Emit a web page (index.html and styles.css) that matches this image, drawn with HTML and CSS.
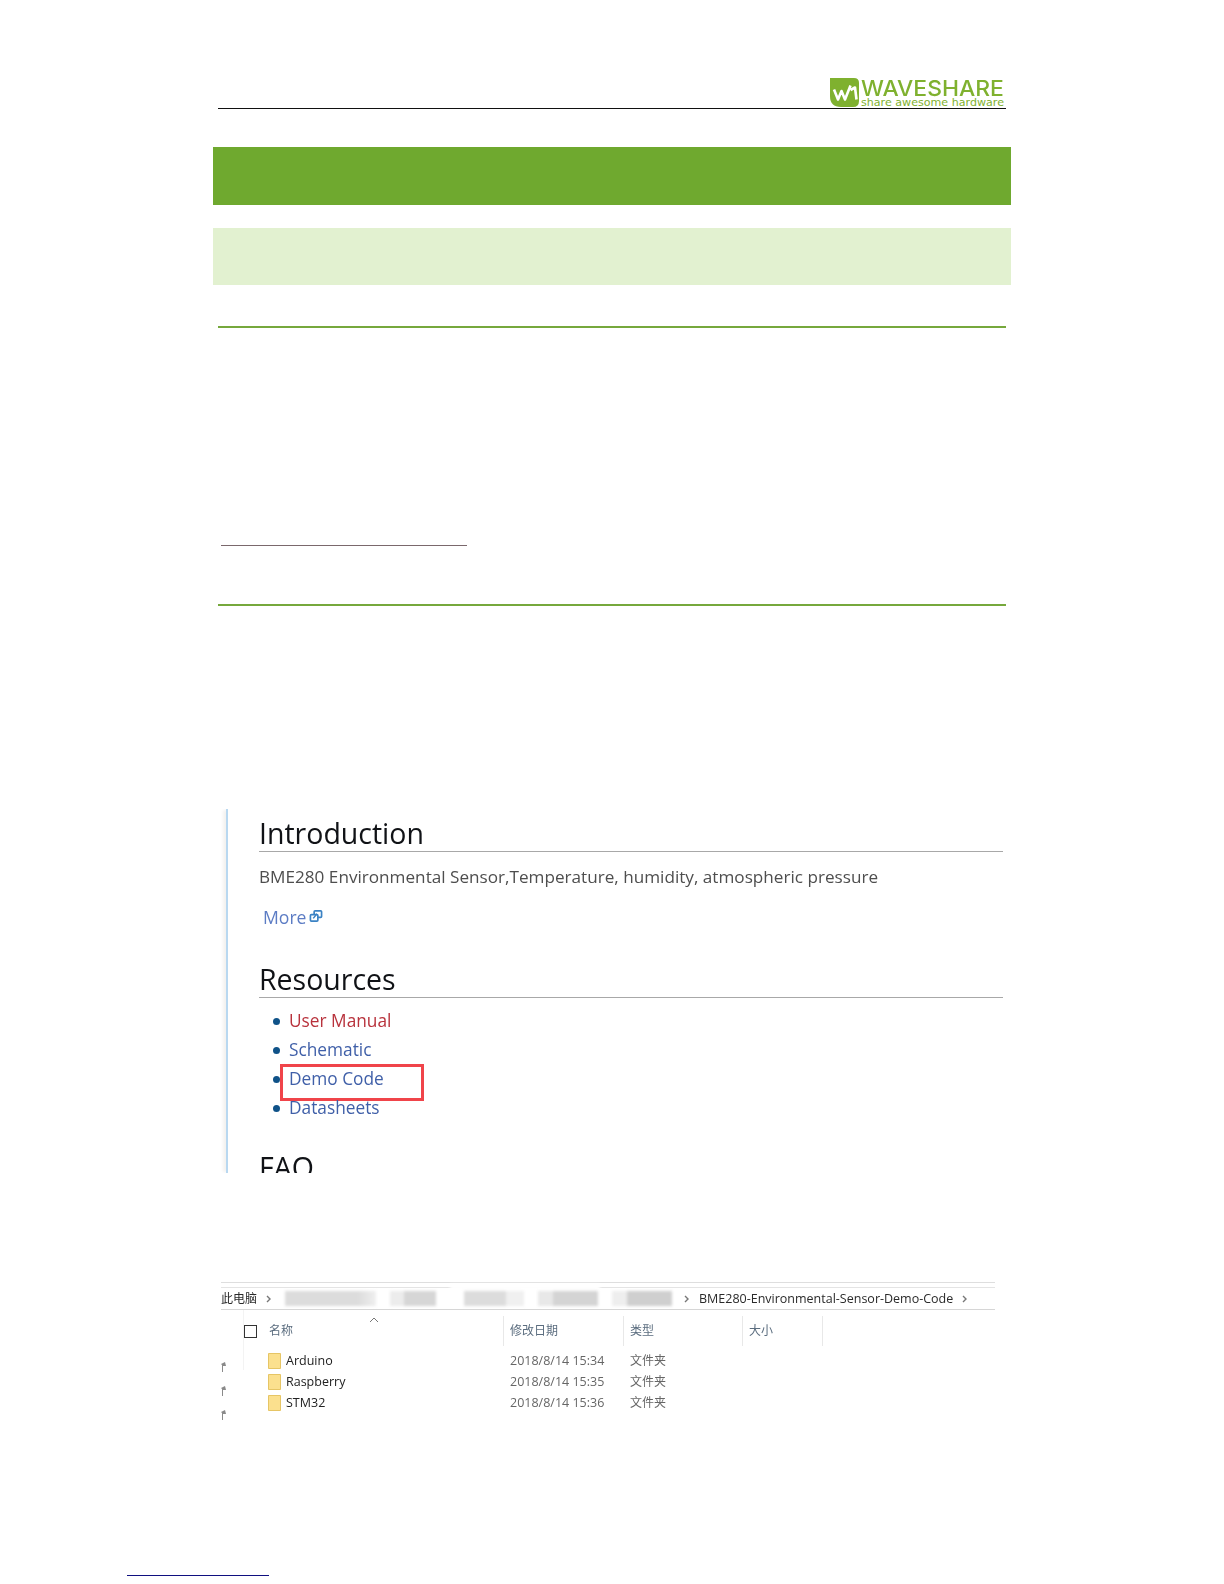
FILE: index.html
```html
<!DOCTYPE html>
<html lang="zh">
<head>
<meta charset="utf-8">
<title>BME280 Environmental Sensor</title>
<link rel="stylesheet" href="styles.css">
</head>
<body>
<div class="page">
  <header class="doc-header">
    <div class="logo">
      <svg class="logo-mark" viewBox="0 0 29 30" width="29" height="30" aria-hidden="true">
        <path d="M0 0H24Q29 0 29 5V23Q29 29 23 29H11Q0 29 0 18Z" fill="#7fb12f"/>
        <path d="M4 11.5L8 21.5L11.5 13L15 21.5L20.5 7.5M20.5 12L25 9.5L26.5 21.5" fill="none" stroke="#fff" stroke-width="2.6" stroke-linejoin="round"/>
      </svg>
      <div class="logo-words">
        <div class="logo-name">WAVESHARE</div>
        <div class="logo-tag">share awesome hardware</div>
      </div>
    </div>
  </header>
  <div class="band band-dark"></div>
  <div class="band band-light"></div>
  <div class="rule-green rule-a"></div>
  <div class="rule-muted"></div>
  <div class="rule-green rule-b"></div>

  <section class="wiki">
    <h2 class="wiki-title">Introduction</h2>
    <p class="wiki-text">BME280 Environmental Sensor,Temperature, humidity, atmospheric pressure</p>
    <p class="wiki-more">More<svg class="ext" viewBox="0 0 14 14" width="14" height="13" aria-hidden="true"><rect x="5" y="1" width="8" height="7" rx="1" fill="none" stroke="#3b82c4" stroke-width="1.8"/><rect x="1" y="5" width="8" height="7" rx="1" fill="#fff" stroke="#3b82c4" stroke-width="1.8"/><path d="M4 9L8 4" stroke="#3b82c4" stroke-width="1.6"/></svg></p>
    <h2 class="wiki-title wiki-title-b">Resources</h2>
    <ul class="wiki-list">
      <li class="missing">User Manual</li>
      <li>Schematic</li>
      <li class="marked">Demo Code<span class="red-box"></span></li>
      <li>Datasheets</li>
    </ul>
    <h2 class="wiki-title wiki-title-c">FAQ</h2>
  </section>

  <section class="explorer">
    <div class="path-bar">
      <span class="crumb-pc">此电脑</span>
      <svg class="chev" viewBox="0 0 6 8" width="6" height="8" aria-hidden="true"><path d="M1 1L4 4L1 7" fill="none" stroke="#777" stroke-width="1.4"/></svg>
      <span class="smudge">
        <i class="s s1"></i><i class="s s2"></i><i class="s s3"></i><i class="s s4"></i><i class="s s5"></i>
        <i class="s-white"></i>
      </span>
      <svg class="chev" viewBox="0 0 6 8" width="6" height="8" aria-hidden="true"><path d="M1 1L4 4L1 7" fill="none" stroke="#777" stroke-width="1.4"/></svg>
      <span class="crumb">BME280-Environmental-Sensor-Demo-Code</span>
      <svg class="chev chev-end" viewBox="0 0 6 8" width="6" height="8" aria-hidden="true"><path d="M1 1L4 4L1 7" fill="none" stroke="#777" stroke-width="1.4"/></svg>
    </div>
    <div class="files">
      <div class="pins">
        <svg class="pin" viewBox="0 0 5 10" width="5" height="10" aria-hidden="true"><path d="M1 10V3L0 2L4 0L5 4L2 4V10Z" fill="#8a8a8a"/></svg>
        <svg class="pin" viewBox="0 0 5 10" width="5" height="10" aria-hidden="true"><path d="M1 10V3L0 2L4 0L5 4L2 4V10Z" fill="#8a8a8a"/></svg>
        <svg class="pin" viewBox="0 0 5 10" width="5" height="10" aria-hidden="true"><path d="M1 10V3L0 2L4 0L5 4L2 4V10Z" fill="#8a8a8a"/></svg>
      </div>
      <div class="table">
        <div class="head">
          <div class="cell cell-name"><span class="check"></span>名称<svg class="caret" viewBox="0 0 10 6" width="10" height="6" aria-hidden="true"><path d="M1 5L5 1L9 5" fill="none" stroke="#777" stroke-width="1"/></svg></div>
          <div class="cell">修改日期</div>
          <div class="cell">类型</div>
          <div class="cell">大小</div>
        </div>
        <div class="row">
          <div class="name"><svg class="folder" viewBox="0 0 13 16" width="13" height="16" aria-hidden="true"><path d="M.5.5H12.5V15.5H.5Z" fill="#fbe08e" stroke="#e6c565"/></svg>Arduino</div>
          <div class="meta">2018/8/14 15:34</div><div class="meta">文件夹</div>
        </div>
        <div class="row">
          <div class="name"><svg class="folder" viewBox="0 0 13 16" width="13" height="16" aria-hidden="true"><path d="M.5.5H12.5V15.5H.5Z" fill="#fbe08e" stroke="#e6c565"/></svg>Raspberry</div>
          <div class="meta">2018/8/14 15:35</div><div class="meta">文件夹</div>
        </div>
        <div class="row">
          <div class="name"><svg class="folder" viewBox="0 0 13 16" width="13" height="16" aria-hidden="true"><path d="M.5.5H12.5V15.5H.5Z" fill="#fbe08e" stroke="#e6c565"/></svg>STM32</div>
          <div class="meta">2018/8/14 15:36</div><div class="meta">文件夹</div>
        </div>
      </div>
    </div>
  </section>
  <div class="foot-rule"></div>
</div>
</body>
</html>
```
FILE: styles.css
```css
* { box-sizing: border-box; }
html, body { margin: 0; background: #fff; }
.page {
  width: 1224px;
  height: 1584px;
  overflow: hidden;
  display: flow-root;
  font-family: "Open Sans", "Noto Sans CJK SC", sans-serif;
}

.doc-header {
  margin: 78px 0 0 218px;
  width: 788px;
  height: 31px;
  border-bottom: 1px solid #111;
  display: flex;
  justify-content: flex-end;
}
.logo { display: flex; gap: 2px; height: 30px; }
.logo-mark { display: block; }
.logo-words { width: 145px; color: #7fb12f; }
.logo-name {
  font: 500 22px/20px "Inter", sans-serif;
  transform: scaleX(1.04);
  transform-origin: left;
  white-space: nowrap;
}
.logo-tag {
  font: 400 11.1px/10px "DejaVu Sans", sans-serif;
  white-space: nowrap;
}

.band { margin-left: 213px; width: 798px; }
.band-dark { height: 58px; margin-top: 38px; background: #6fa92f; }
.band-light { height: 57px; margin-top: 23px; background: #e2f1d0; }
.rule-green { margin-left: 218px; width: 788px; height: 2px; background: #76a83c; }
.rule-a { margin-top: 41px; }
.rule-muted { margin: 217px 0 0 221px; width: 246px; height: 1px; background: #7a686c; }
.rule-b { margin-top: 58px; }

.wiki {
  margin: 203px 0 0 226px;
  width: 780px;
  height: 364px;
  overflow: hidden;
  padding-left: 31px;
  border-left: 2px solid #b9d8f0;
  box-shadow: -4px 0 3px -1px #f4f2f0;
  clip-path: inset(0 0 0 -6px);
  filter: blur(.35px);
}
.wiki-title {
  margin: 0;
  width: 744px;
  height: 43px;
  font: 400 28.5px/48px "Open Sans", sans-serif;
  color: #101216;
  border-bottom: 1px solid #a8a8a8;
}
.wiki-text {
  margin: 13px 0 0;
  font: 400 17.15px/24px "Open Sans", sans-serif;
  color: #4e4e4e;
  white-space: nowrap;
}
.wiki-more {
  margin: 16px 0 0 4px;
  font: 400 17.6px/24px "Open Sans", sans-serif;
  color: #5c7cc4;
  display: flex;
  align-items: center;
  gap: 3px;
}
.ext { margin-top: -1px; }
.wiki-title-b { margin-top: 26px; }
.wiki-list {
  list-style: none;
  margin: 8px 0 0;
  padding: 0 0 0 30px;
  font: 400 17.3px/29px "Open Sans", sans-serif;
  color: #3f5fa8;
}
.wiki-list li { position: relative; height: 29px; }
.wiki-list li::before {
  content: "";
  position: absolute;
  left: -16px;
  top: 12px;
  width: 7px;
  height: 7px;
  border-radius: 50%;
  background: #0f5288;
}
.wiki-list .missing { color: #b8323c; }
.red-box {
  position: absolute;
  left: -9px;
  top: 0;
  width: 144px;
  height: 37px;
  border: 3px solid #f0444a;
}
.wiki-title-c { margin-top: 21px; border: 0; }

.explorer {
  margin: 109px 0 0 221px;
  width: 774px;
  padding-top: 4px;
  border-top: 1px solid #dedede;
  filter: blur(.3px);
}
.path-bar {
  height: 23px;
  border-top: 1px solid #e4e4e4;
  border-bottom: 1px solid #d6d6d6;
  display: flex;
  align-items: center;
  font-size: 12px;
  line-height: 18px;
  color: #2a2a2a;
}
.crumb-pc { width: 45px; flex: none; }
.chev { display: block; flex: none; }
.chev-end { margin-left: 9px; }
.crumb { white-space: nowrap; margin-left: 9px; font-size: 12.5px; }
.smudge {
  position: relative;
  display: flex;
  flex: none;
  width: 412px;
  height: 18px;
  filter: blur(1.5px);
  align-items: center;
}
.s { display: block; height: 15px; flex: none; }
.s1 { width: 91px; margin-left: 13px; background: linear-gradient(90deg, #dcdcdc 0 80%, #efefef); }
.s2 { width: 46px; margin-left: 14px; background: linear-gradient(90deg, #ececec 0 30%, #d6d6d6 30%); }
.s3 { width: 60px; margin-left: 28px; background: linear-gradient(90deg, #dcdcdc 0 70%, #f0f0f0 70%); }
.s4 { width: 60px; margin-left: 14px; background: linear-gradient(90deg, #e8e8e8 0 25%, #d4d4d4 25%); }
.s5 { width: 60px; margin-left: 14px; background: linear-gradient(90deg, #eeeeee 0 25%, #cfcfcf 25%); }
.s-white {
  position: absolute;
  left: 178px;
  top: -6px;
  width: 150px;
  height: 6px;
  background: #fff;
}

.files { display: flex; }
.pins {
  width: 23px;
  height: 60px;
  flex: none;
  padding-top: 52px;
  display: flex;
  flex-direction: column;
  gap: 14px;
  border-right: 1px solid #f3f3f3;
}
.pin { display: block; flex: none; }
.table { flex: 1; padding-top: 6px; }
.head, .row { display: grid; grid-template-columns: 260px 120px 119px 80px; }
.head { height: 29px; color: #5b6d7f; font-size: 12px; line-height: 30px; }
.cell { padding-left: 6px; border-right: 1px solid #e8e8e8; }
.cell-name {
  position: relative;
  display: flex;
  align-items: center;
  padding-left: 25px;
  white-space: nowrap;
}
.check { position: absolute; left: 0; top: 9px; width: 13px; height: 13px; border: 1px solid #333; }
.caret { position: absolute; left: 125px; top: 1px; }
.row { height: 21px; font-size: 12.5px; line-height: 21px; }
.head + .row { margin-top: 5px; }
.name { display: flex; align-items: center; gap: 5px; padding-left: 24px; color: #222; }
.folder { display: block; flex: none; }
.meta { padding-left: 6px; color: #666; white-space: nowrap; }
.meta + .meta { font-size: 12px; }

.foot-rule { margin: 162px 0 0 127px; width: 142px; height: 1px; background: #101080; }
```
